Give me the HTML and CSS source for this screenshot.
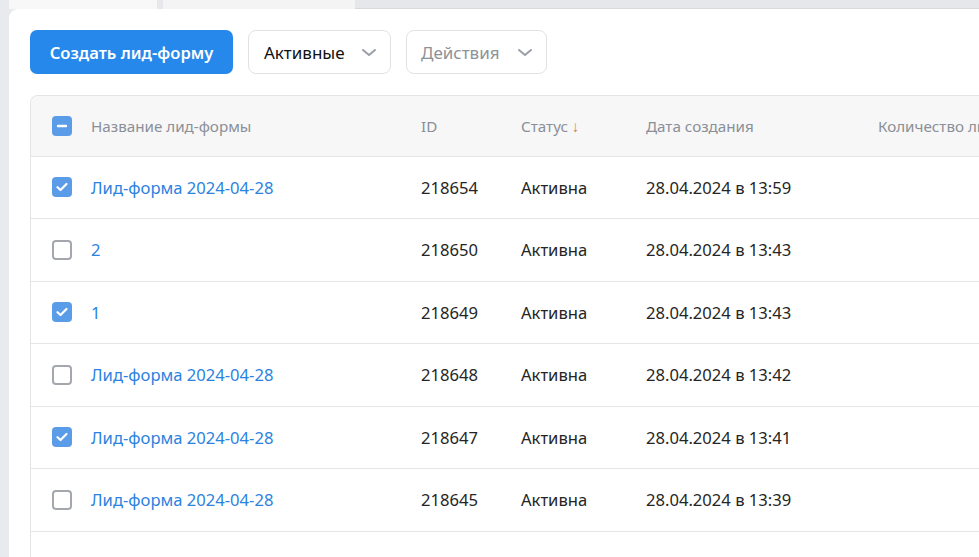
FILE: index.html
```html
<!DOCTYPE html>
<html lang="ru">
<head>
<meta charset="utf-8">
<link rel="stylesheet" href="styles.css">
</head>
<body>
<div class="page">
  <div class="topstrip">
    <div class="seg seg-a"></div>
    <div class="seg seg-gap"></div>
    <div class="seg seg-b"></div>
    <div class="seg seg-c"></div>
  </div>
  <div class="card">
    <div class="toolbar">
      <button class="btn-primary">Создать лид-форму</button>
      <div class="select">
        <span class="select-label">Активные</span>
        <svg class="chev" width="16" height="10" viewBox="0 0 16 10"><path d="M2 2l6 5 6-5" fill="none" stroke="#9a9ea6" stroke-width="2" stroke-linecap="round" stroke-linejoin="round"/></svg>
      </div>
      <div class="select select-muted">
        <span class="select-label">Действия</span>
        <svg class="chev" width="16" height="10" viewBox="0 0 16 10"><path d="M2 2l6 5 6-5" fill="none" stroke="#9a9ea6" stroke-width="2" stroke-linecap="round" stroke-linejoin="round"/></svg>
      </div>
    </div>
    <div class="table-wrap">
      <table class="grid">
        <colgroup>
          <col class="c-check"><col class="c-name"><col class="c-id"><col class="c-status"><col class="c-date"><col class="c-count">
        </colgroup>
        <thead>
          <tr>
            <th class="cell-check"><span class="cb cb-on"><svg width="20" height="20" viewBox="0 0 20 20"><path d="M6 10h8" stroke="#fff" stroke-width="2.4" stroke-linecap="round"/></svg></span></th>
            <th>Название лид-формы</th>
            <th>ID</th>
            <th>Статус <span class="sort">↓</span></th>
            <th>Дата создания</th>
            <th>Количество лидов</th>
          </tr>
        </thead>
        <tbody>
          <tr>
            <td class="cell-check"><span class="cb cb-on"><svg width="20" height="20" viewBox="0 0 20 20"><path d="M5.5 10.2l3 2.8 6-6" fill="none" stroke="#fff" stroke-width="2.2" stroke-linecap="round" stroke-linejoin="round"/></svg></span></td>
            <td><a class="link">Лид-форма 2024-04-28</a></td>
            <td>218654</td><td>Активна</td><td>28.04.2024 в 13:59</td><td></td>
          </tr>
          <tr>
            <td class="cell-check"><span class="cb"></span></td>
            <td><a class="link">2</a></td>
            <td>218650</td><td>Активна</td><td>28.04.2024 в 13:43</td><td></td>
          </tr>
          <tr>
            <td class="cell-check"><span class="cb cb-on"><svg width="20" height="20" viewBox="0 0 20 20"><path d="M5.5 10.2l3 2.8 6-6" fill="none" stroke="#fff" stroke-width="2.2" stroke-linecap="round" stroke-linejoin="round"/></svg></span></td>
            <td><a class="link">1</a></td>
            <td>218649</td><td>Активна</td><td>28.04.2024 в 13:43</td><td></td>
          </tr>
          <tr>
            <td class="cell-check"><span class="cb"></span></td>
            <td><a class="link">Лид-форма 2024-04-28</a></td>
            <td>218648</td><td>Активна</td><td>28.04.2024 в 13:42</td><td></td>
          </tr>
          <tr>
            <td class="cell-check"><span class="cb cb-on"><svg width="20" height="20" viewBox="0 0 20 20"><path d="M5.5 10.2l3 2.8 6-6" fill="none" stroke="#fff" stroke-width="2.2" stroke-linecap="round" stroke-linejoin="round"/></svg></span></td>
            <td><a class="link">Лид-форма 2024-04-28</a></td>
            <td>218647</td><td>Активна</td><td>28.04.2024 в 13:41</td><td></td>
          </tr>
          <tr>
            <td class="cell-check"><span class="cb"></span></td>
            <td><a class="link">Лид-форма 2024-04-28</a></td>
            <td>218645</td><td>Активна</td><td>28.04.2024 в 13:39</td><td></td>
          </tr>
          <tr class="row-empty">
            <td class="cell-check"></td><td></td><td></td><td></td><td></td><td></td>
          </tr>
        </tbody>
      </table>
    </div>
  </div>
</div>
</body>
</html>
```

FILE: styles.css
```css
* { box-sizing: border-box; }
html, body { margin: 0; padding: 0; }
body {
  width: 979px;
  height: 557px;
  overflow: hidden;
  background: #e9eaed;
  font-family: "Noto Sans", "Open Sans", sans-serif;
  color: #222;
}
.page {
  padding-left: 9px;
  height: 557px;
  display: flex;
  flex-direction: column;
}
.topstrip {
  height: 9px;
  display: flex;
  flex: 0 0 9px;
}
.seg-a { width: 148px; background: #f8f8f9; }
.seg-gap { width: 6px; background: #e8e8ec; }
.seg-b { width: 192px; background: #f4f4f5; }
.seg-c { flex: 1; background: #e6e7ea; border-bottom: 1px solid #d8d9dc; }

.card {
  flex: 1;
  width: 1400px;
  background: #fff;
  border-top-left-radius: 9px;
  padding: 21px 0 0 21px;
}
.toolbar {
  display: flex;
  gap: 15px;
  height: 44px;
}
.btn-primary {
  width: 203px;
  height: 44px;
  border: none;
  border-radius: 7px;
  background: #2688ea;
  color: #fff;
  font-family: inherit;
  font-size: 16.6px;
  font-weight: 600;
  padding: 0;
}
.select {
  height: 44px;
  border: 1px solid #e1e2e4;
  border-radius: 8px;
  display: flex;
  align-items: center;
  justify-content: space-between;
  padding: 0 13px 0 15px;
  font-size: 17px;
  color: #111;
}
.select:nth-child(2) { width: 143px; }
.select-muted { width: 141px; color: #8e9196; padding-left: 14px; }
.select .chev { margin-top: 1px; }

.table-wrap {
  margin-top: 21px;
  border: 1px solid #e3e4e6;
  border-right: none;
  border-top-left-radius: 8px;
  overflow: hidden;
}
.grid {
  border-collapse: collapse;
  table-layout: fixed;
  width: 1200px;
}
.c-check { width: 60px; }
.c-name { width: 330px; }
.c-id { width: 100px; }
.c-status { width: 125px; }
.c-date { width: 232px; }
.c-count { width: 353px; }

.grid th {
  background: #f7f7f7;
  height: 60px;
  text-align: left;
  font-weight: 400;
  font-size: 15.2px;
  color: #8a8f98;
  padding: 0;
  border-bottom: 1px solid #e5e6e8;
  white-space: nowrap;
  overflow: hidden;
}
.grid td {
  height: 62.5px;
  padding: 0;
  font-size: 16.6px;
  color: #252525;
  border-bottom: 1px solid #e5e6e8;
  white-space: nowrap;
}
.grid tbody tr td { vertical-align: middle; }
.cell-check { padding-left: 21px !important; }
.cb {
  display: block;
  width: 20px;
  height: 20px;
  border: 2px solid #a4a7ad;
  border-radius: 4px;
  background: #fff;
}
.cb-on {
  border: none;
  background: #5b9ce8;
}
.cb svg { display: block; }
.link { color: #2b82df; text-decoration: none; }
.sort { color: #d9834c; }
.row-empty td { height: 40px; }
```
